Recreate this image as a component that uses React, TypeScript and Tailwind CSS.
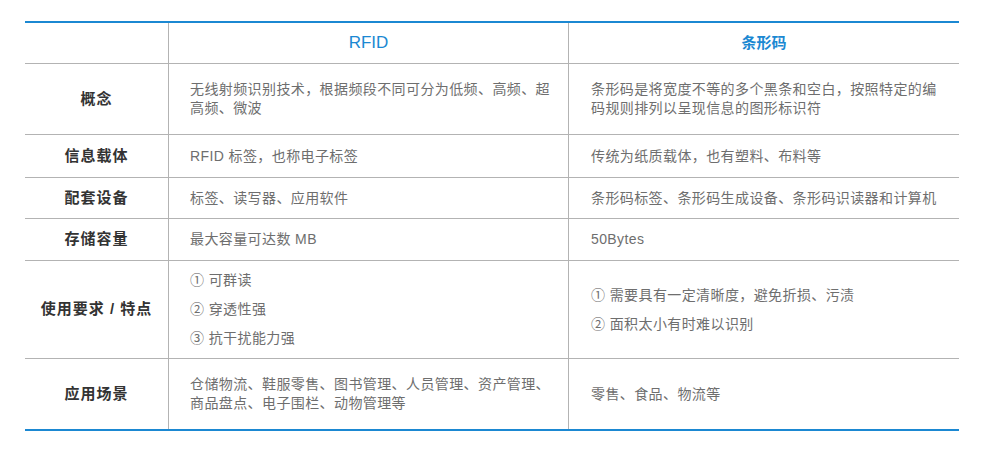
import React from "react";

const FONT = { fontFamily: '"Liberation Sans", "Noto Sans CJK SC", sans-serif' };

type Row = { label: string; a: React.ReactNode; b: React.ReactNode; h: string };

const List = ({ items }: { items: string[] }) => (
  <div className="flex flex-col gap-[10px]">
    {items.map((t) => (
      <div key={t}>{t}</div>
    ))}
  </div>
);

const Lines = ({ lines }: { lines: string[] }) => (
  <div className="flex flex-col">
    {lines.map((t) => (
      <div key={t} className="whitespace-nowrap">
        {t}
      </div>
    ))}
  </div>
);

const rows: Row[] = [
  {
    label: "概念",
    a: <Lines lines={["无线射频识别技术，根据频段不同可分为低频、高频、超", "高频、微波"]} />,
    b: <Lines lines={["条形码是将宽度不等的多个黑条和空白，按照特定的编", "码规则排列以呈现信息的图形标识符"]} />,
    h: "h-[71px]",
  },
  { label: "信息载体", a: "RFID 标签，也称电子标签", b: "传统为纸质载体，也有塑料、布料等", h: "h-[43px]" },
  { label: "配套设备", a: "标签、读写器、应用软件", b: "条形码标签、条形码生成设备、条形码识读器和计算机", h: "h-[41px]" },
  { label: "存储容量", a: "最大容量可达数 MB", b: "50Bytes", h: "h-[42px]" },
  {
    label: "使用要求 / 特点",
    a: <List items={["① 可群读", "② 穿透性强", "③ 抗干扰能力强"]} />,
    b: <List items={["① 需要具有一定清晰度，避免折损、污渍", "② 面积太小有时难以识别"]} />,
    h: "h-[98px]",
  },
  {
    label: "应用场景",
    a: <Lines lines={["仓储物流、鞋服零售、图书管理、人员管理、资产管理、", "商品盘点、电子围栏、动物管理等"]} />,
    b: "零售、食品、物流等",
    h: "h-[70px]",
  },
];

export default function App() {
  return (
    <div className="w-[998px] h-[455px] bg-white pt-[21px] pl-[25px]" style={FONT}>
      <div className="w-[934px] border-t-2 border-b-2 border-[#1b88d2]">
        <div className="grid grid-cols-[143px_400px_391px] h-[41px] border-b border-[#b3b3b3]">
          <div />
          <div className="border-l border-[#b3b3b3] flex items-center justify-center text-[17px] text-[#1b88d2]">
            RFID
          </div>
          <div className="border-l border-[#b3b3b3] flex items-center justify-center text-[15px] text-[#1b88d2] font-bold">
            条形码
          </div>
        </div>
        {rows.map((r, i) => (
          <div
            key={r.label}
            className={`grid grid-cols-[143px_400px_391px] ${r.h} ${i < rows.length - 1 ? "border-b border-[#b3b3b3]" : ""}`}
          >
            <div className="flex items-center justify-center text-[15px] font-bold text-[#333333] tracking-[1px]">
              {r.label}
            </div>
            <div className="border-l border-[#b3b3b3] flex items-center pl-[21px] pr-[10px] text-[14px] leading-[19px] text-[#6e6e6e] tracking-[0.4px]">
              <div>{r.a}</div>
            </div>
            <div className="border-l border-[#b3b3b3] flex items-center pl-[22px] pr-[10px] text-[14px] leading-[19px] text-[#6e6e6e] tracking-[0.4px]">
              <div>{r.b}</div>
            </div>
          </div>
        ))}
      </div>
    </div>
  );
}
